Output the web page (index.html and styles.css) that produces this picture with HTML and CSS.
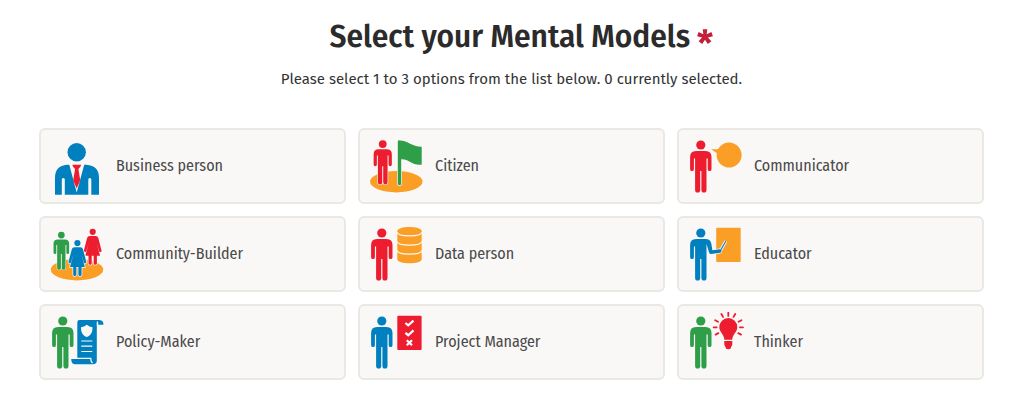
FILE: index.html
```html
<!DOCTYPE html>
<html lang="en">
<head>
<meta charset="utf-8">
<meta name="viewport" content="width=device-width, initial-scale=1">
<title>Select your Mental Models</title>
<link rel="stylesheet" href="styles.css">
</head>
<body>
<svg class="defs" aria-hidden="true">
  <symbol id="man" viewBox="0 0 60 60" overflow="visible">
    <circle cx="15.8" cy="9" r="4.6"/>
    <path d="M11 15h9.5q6 0 6 6v12.2a1.9 1.9 0 0 1-3.8 0V22.5h-1.2V54a2.55 2.55 0 0 1-5.1 0V35h-1.2v19a2.55 2.55 0 0 1-5.1 0V22.5H8.9v10.7a1.9 1.9 0 0 1-3.8 0V21q0-6 5.9-6z"/>
  </symbol>
  <g id="woman">
    <circle r="3.1"/>
    <path d="M-3 4.3H3Q5 4.3 5.6 6.2L8.8 18.6a1.2 1.2 0 0 1-2.3.8L4 11.5 7.4 24H4.2V31.4a1.5 1.5 0 0 1-3.2 0V24H-1V31.4a1.5 1.5 0 0 1-3.2 0V24H-7.4L-4 11.5-6.5 19.4a1.2 1.2 0 0 1-2.3-.8L-5.6 6.2Q-5 4.3-3 4.3z"/>
  </g>
</svg>
<main class="page">
  <h1 class="title">Select your Mental Models
    <svg class="required" viewBox="0 0 16 16" role="img" aria-label="required"><path d="M5.7.2H10.3L9.7 5.2 14.4 3 15.9 7.2 10.9 8.4 14.4 12.3 10.8 15.1 8 10.7 5.2 15.1 1.6 12.3 5.1 8.4.1 7.2 1.6 3 6.3 5.2z"/></svg>
  </h1>
  <p class="hint">Please select 1 to 3 options from the list below. 0 currently selected.</p>
  <div class="options">
    <button class="option" type="button" aria-pressed="false">
      <svg class="icon" viewBox="0 0 60 60" aria-hidden="true">
        <g class="blue"><circle cx="29.7" cy="16.3" r="9.2"/>
        <path d="M20 28.7H22.3L29.7 56.5 37.2 28.7H39.5Q52 29.5 52 42V58.7H44.3V43.5a1.5 1.5 0 0 0-3 0V58.7H17.8V43.5a1.5 1.5 0 0 0-3 0V58.7H8V42Q8 29.5 20 28.7z"/></g>
        <path class="red" d="M25.3 28.7h8.9l-.8 2.1-2 2.3 1.8 11.1-3.5 8.4-3.5-8.4 1.9-11.1-2-2.3z"/>
      </svg>
      <span>Business person</span>
    </button>
    <button class="option" type="button" aria-pressed="false">
      <svg class="icon" viewBox="0 0 60 60" aria-hidden="true">
        <ellipse class="orange" cx="30.3" cy="45.7" rx="26.2" ry="10.7"/>
        <g class="red outlined" transform="translate(3.3 .4) scale(.85)"><use href="#man" width="60" height="60"/></g>
        <path class="green outlined" d="M31.8 5.5Q31.8 4 34 4.4C42 4.5 46 10.8 55.7 10.7V28.7C46 30 43 22.8 35.2 23.3V47.5a1.7 1.7 0 0 1-3.4 0z"/>
      </svg>
      <span>Citizen</span>
    </button>
    <button class="option" type="button" aria-pressed="false">
      <svg class="icon" viewBox="0 0 60 60" aria-hidden="true">
        <use class="red" href="#man" width="60" height="60"/>
        <path class="orange" d="M26.2 12.9Q30 13.6 33.2 13A12.5 12.5 0 1 1 31.8 17Q29 15.5 26.2 12.9z"/>
      </svg>
      <span>Communicator</span>
    </button>
    <button class="option" type="button" aria-pressed="false">
      <svg class="icon" viewBox="0 0 60 60" aria-hidden="true">
        <ellipse class="orange" cx="30" cy="45.7" rx="26.2" ry="10.7"/>
        <g class="red outlined" transform="translate(45.7 7.8)"><use href="#woman"/></g>
        <g class="green outlined" transform="translate(2.8 4.5) scale(.73)"><use href="#man" width="60" height="60"/></g>
        <g class="blue outlined" transform="translate(30.4 19)"><use href="#woman"/></g>
      </svg>
      <span>Community-Builder</span>
    </button>
    <button class="option" type="button" aria-pressed="false">
      <svg class="icon" viewBox="0 0 60 60" aria-hidden="true">
        <use class="red" href="#man" width="60" height="60"/>
        <path class="orange" d="M31.3 7.2C31.3 1.6 55.7 1.6 55.7 7.2V35C55.7 40.8 31.3 40.8 31.3 35z"/>
        <path class="gap" d="M31 8.2C32 13.2 55 13.2 56 8.2M31 17.3C32 22.3 55 22.3 56 17.3M31 26.3C32 31.3 55 31.3 56 26.3"/>
      </svg>
      <span>Data person</span>
    </button>
    <button class="option" type="button" aria-pressed="false">
      <svg class="icon" viewBox="0 0 60 60" aria-hidden="true">
        <rect class="orange" x="31.2" y="3.7" width="24.5" height="34.3" rx="1"/>
        <path class="pointer-edge" d="M35 27.3L40.8 17.2"/>
        <path class="blue outlined" d="M11 15H20.5Q25.2 15 26.2 19L27.4 26.2 34.8 25.2a1.8 1.8 0 0 1 .5 3.5L26 30Q24.5 30 24.1 28.4L21.5 20V54a2.55 2.55 0 0 1-5.1 0V35h-1.2v19a2.55 2.55 0 0 1-5.1 0V22.5H8.9v10.7a1.9 1.9 0 0 1-3.8 0V21q0-6 5.9-6z"/>
        <circle class="blue" cx="15.8" cy="9" r="4.6"/>
        <path class="pointer" d="M35 27.3L40.8 17.2"/>
      </svg>
      <span>Educator</span>
    </button>
    <button class="option" type="button" aria-pressed="false">
      <svg class="icon" viewBox="0 0 60 60" aria-hidden="true">
        <use class="green" href="#man" width="60" height="60"/>
        <path class="blue" d="M32.5 8H52.5Q56.5 8.3 56.5 12.8H51.2V10.5Q49.8 9.8 49.8 12V48.5Q49.8 52.3 46 52.3H27.5Q24.2 52 24.2 47H30.3V10.2Q30.3 8 32.5 8z"/>
        <path class="cut" d="M39.8 12.8Q42.5 15 45.5 15.2C45.5 21 43.5 23.5 39.8 25 36 23.5 34 21 34 15.2Q37 15 39.8 12.8z"/>
        <path class="gap" d="M34.3 29H45.3M34.3 34.2H45.3M34.3 39.5H45.3M50.4 9.5V13M30 46.4H43.8Q43.8 50 45.6 51"/>
      </svg>
      <span>Policy-Maker</span>
    </button>
    <button class="option" type="button" aria-pressed="false">
      <svg class="icon" viewBox="0 0 60 60" aria-hidden="true">
        <use class="blue" href="#man" width="60" height="60"/>
        <rect class="red" x="31.3" y="3.7" width="24.3" height="34.3" rx="1"/>
        <path class="mark" d="M39.4 11L42.2 13.4 47.5 8.6M39.4 20.8L42.2 23.2 47.5 18.4M40.8 28.2L46 33.2M46 28.2L40.8 33.2"/>
      </svg>
      <span>Project Manager</span>
    </button>
    <button class="option" type="button" aria-pressed="false">
      <svg class="icon" viewBox="0 0 60 60" aria-hidden="true">
        <use class="green" href="#man" width="60" height="60"/>
        <path class="red" d="M43.3 6A9 9 0 0 1 52.3 15C52.3 20.5 47.3 22 47.3 27.8H39.3C39.3 22 34.3 20.5 34.3 15A9 9 0 0 1 43.3 6zM39.3 28.9H47.3V32.5Q47 34 46.2 34.8 46 37.3 43.3 37.3 40.6 37.3 40.4 34.8 39.6 34 39.3 32.5z"/>
        <path class="rays" d="M43.3.8V3.9M36.4 2L38 4.9M50.2 2L48.6 4.9M30.2 8.2L33 9.8M56.4 8.2L53.6 9.8M28.6 15.3H31.7M58 15.3H54.9M30.6 22.6L33.3 21.1M56 22.6L53.3 21.1"/>
      </svg>
      <span>Thinker</span>
    </button>
  </div>
</main>
</body>
</html>
```
FILE: styles.css
```css
* {
  box-sizing: border-box;
}

body {
  margin: 0;
  background: #fff;
  color: #2b2b2b;
  font-family: "Fira Sans", "Noto Sans", sans-serif;
}

.defs {
  display: block;
  width: 0;
  height: 0;
}

.page {
  padding: 16px 40px 38px 39px;
}

.title {
  margin: 0;
  padding-left: 20px;
  font-size: 30px;
  line-height: 42px;
  font-weight: 600;
  text-align: center;
}

.required {
  width: 16px;
  height: 16px;
  fill: #c41e3a;
  vertical-align: 2px;
}

.hint {
  margin: 11px 0 38px;
  color: #333;
  font-size: 15px;
  line-height: 21px;
  text-align: center;
}

.options {
  display: grid;
  grid-template-columns: repeat(3, 1fr);
  gap: 12px;
}

.option {
  display: flex;
  align-items: center;
  gap: 9px;
  padding: 6px;
  border: 2px solid #e9e8e3;
  border-radius: 6px;
  background: #faf8f7;
  color: #4a4a4a;
  font-family: "Fira Sans Condensed", "Noto Sans", sans-serif;
  font-size: 16px;
  line-height: 20px;
  text-align: left;
  cursor: pointer;
}

.option[aria-pressed="true"] {
  border-color: #0080bf;
}

.icon {
  flex: none;
  width: 60px;
  height: 60px;
}

.red { fill: #ed1c2e; }
.blue { fill: #0080bf; }
.green { fill: #2f9e49; }
.orange { fill: #fb9e25; }
.cut { fill: #faf8f7; }

.outlined {
  stroke: #faf8f7;
  stroke-width: 1.4px;
  paint-order: stroke;
}

.gap,
.mark,
.rays,
.pointer,
.pointer-edge {
  fill: none;
  stroke: #faf8f7;
  stroke-width: 1.2px;
}

.mark {
  stroke: #fff;
  stroke-width: 2.2px;
}

.rays {
  stroke: #ed1c2e;
  stroke-width: 1.8px;
  stroke-linecap: round;
}

.pointer {
  stroke: #0080bf;
}

.pointer-edge {
  stroke-width: 3px;
}
```
